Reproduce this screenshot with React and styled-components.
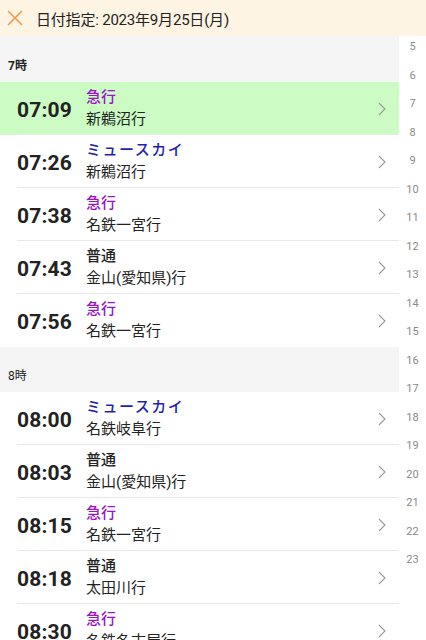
import React from 'react'
import styled, { createGlobalStyle } from 'styled-components'

const GlobalStyle = createGlobalStyle`
  html, body {
    margin: 0;
    padding: 0;
    background: #ffffff;
  }
  body {
    font-family: Roboto, 'Noto Sans CJK JP', sans-serif;
    color: #222;
  }
`

const Page = styled.div`
  width: 426px;
  height: 640px;
  overflow: hidden;
  display: flex;
  flex-direction: column;
`
const TopBar = styled.div`
  height: 36px;
  flex-shrink: 0;
  background-color: #fdf4e4;
  display: flex;
  align-items: center;
  padding-left: 7px;
  gap: 13px;
`
const TopTitle = styled.div`
  font-size: 15px;
  color: #222;
  letter-spacing: -0.2px;
`
const Body = styled.div`
  flex: 1;
  display: flex;
  min-height: 0;
`
const List = styled.div`
  width: 399px;
  flex-shrink: 0;
  display: flex;
  flex-direction: column;
`
const HourHeader = styled.div`
  height: ${(props) => props.h}px;
  flex-shrink: 0;
  background-color: #f5f5f5;
  display: flex;
  align-items: center;
  padding: 10px 0 0 8px;
  box-sizing: border-box;
  font-size: 12px;
  font-weight: ${(props) => (props.bold ? 700 : 400)};
  color: #222;
`
const Row = styled.div`
  height: 53px;
  flex-shrink: 0;
  box-sizing: border-box;
  display: flex;
  align-items: center;
  background-color: ${(props) => (props.active ? '#ccfcc4' : '#ffffff')};
  position: relative;
  padding: 0 13px 0 17px;
  &:after {
    content: '';
    position: absolute;
    left: 17px;
    right: 0;
    bottom: 0;
    height: 1px;
    background-color: ${(props) => (props.noLine ? 'transparent' : '#e8e8e8')};
  }
`
const Time = styled.div`
  width: 69px;
  font-size: 21px;
  font-weight: 700;
  color: #222;
  letter-spacing: 0.2px;
  padding-top: 2px;
`
const Info = styled.div`
  flex: 1;
  display: flex;
  flex-direction: column;
  gap: 2px;
  padding-bottom: 2px;
`
const TrainType = styled.div`
  font-size: 15px;
  line-height: 20px;
  font-weight: 500;
  color: ${(props) => props.color};
  letter-spacing: ${(props) => (props.wide ? '1.5px' : '0')};
`
const Dest = styled.div`
  font-size: 15px;
  line-height: 20px;
  color: #222;
`
const Chevron = styled.svg`
  width: 8px;
  height: 14px;
  flex-shrink: 0;
`
const IndexCol = styled.div`
  flex: 1;
  display: flex;
  flex-direction: column;
  align-items: center;
`
const IndexItem = styled.div`
  height: 28.5px;
  flex-shrink: 0;
  padding-top: 4px;
  box-sizing: border-box;
  font-size: 11px;
  line-height: 13px;
  color: #8a8a8a;
`

const TYPES = {
  express: { label: '急行', color: '#9a14c8' },
  sky: { label: 'ミュースカイ', color: '#1f1fb0', wide: true },
  local: { label: '普通', color: '#222' },
}

const hours = [
  {
    hour: '7時',
    bold: true,
    h: 46,
    trains: [
      { time: '07:09', type: 'express', dest: '新鵜沼行', active: true },
      { time: '07:26', type: 'sky', dest: '新鵜沼行' },
      { time: '07:38', type: 'express', dest: '名鉄一宮行' },
      { time: '07:43', type: 'local', dest: '金山(愛知県)行' },
      { time: '07:56', type: 'express', dest: '名鉄一宮行', last: true },
    ],
  },
  {
    hour: '8時',
    h: 45,
    trains: [
      { time: '08:00', type: 'sky', dest: '名鉄岐阜行' },
      { time: '08:03', type: 'local', dest: '金山(愛知県)行' },
      { time: '08:15', type: 'express', dest: '名鉄一宮行' },
      { time: '08:18', type: 'local', dest: '太田川行' },
      { time: '08:30', type: 'express', dest: '名鉄名古屋行' },
    ],
  },
]

const indexNumbers = Array.from({ length: 19 }, (_, i) => i + 5)

const CloseIcon = () => (
  <svg width="16" height="16" viewBox="0 0 16 16">
    <path d="M1 1 L15 15 M15 1 L1 15" stroke="#f29a4a" strokeWidth="1.6" fill="none" />
  </svg>
)

const TrainRow = ({ train }) => {
  const t = TYPES[train.type]
  return (
    <Row active={train.active} noLine={train.last}>
      <Time>{train.time}</Time>
      <Info>
        <TrainType color={t.color} wide={t.wide}>
          {t.label}
        </TrainType>
        <Dest>{train.dest}</Dest>
      </Info>
      <Chevron viewBox="0 0 8 14">
        <path d="M1 1 L7 7 L1 13" stroke="#9a9a9a" strokeWidth="1.1" fill="none" />
      </Chevron>
    </Row>
  )
}

const App = () => {
  return (
    <Page>
      <GlobalStyle />
      <TopBar>
        <CloseIcon />
        <TopTitle>日付指定: 2023年9月25日(月)</TopTitle>
      </TopBar>
      <Body>
        <List>
          {hours.map((h) => (
            <React.Fragment key={h.hour}>
              <HourHeader bold={h.bold} h={h.h}>
                {h.hour}
              </HourHeader>
              {h.trains.map((train) => (
                <TrainRow key={train.time} train={train} />
              ))}
            </React.Fragment>
          ))}
        </List>
        <IndexCol>
          {indexNumbers.map((n) => (
            <IndexItem key={n}>{n}</IndexItem>
          ))}
        </IndexCol>
      </Body>
    </Page>
  )
}

export default App
